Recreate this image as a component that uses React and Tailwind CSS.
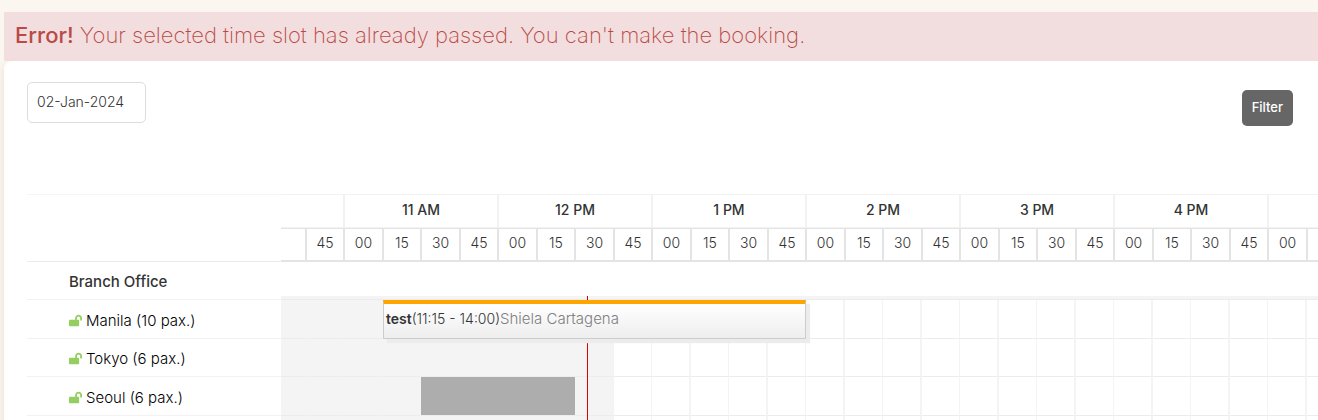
import React, { useState } from 'react';
import { FaLockOpen } from 'react-icons/fa';

const HOURS = ['11 AM', '12 PM', '1 PM', '2 PM', '3 PM', '4 PM'];
const QUARTERS = ['00', '15', '30', '45'];

const ROOMS = [
  { name: 'Manila', pax: 10, height: 'h-[39px]' },
  { name: 'Tokyo', pax: 6, height: 'h-[38px]' },
  { name: 'Seoul', pax: 6, height: 'h-[39px]' },
];

const SLOTS = [
  { key: '10 AM 30', label: '' },
  { key: '10 AM 45', label: '45' },
  ...HOURS.flatMap((h) => QUARTERS.map((q) => ({ key: `${h} ${q}`, label: q }))),
  { key: '5 PM 00', label: '00' },
  { key: '5 PM 15', label: '' },
];
const PAST_SLOTS = 9;

function slotWidth(i) {
  if (i === 0) return 'w-[25px]';
  return i % 2 ? 'w-[38px]' : 'w-[39px]';
}

function Booking({ title, time, owner }) {
  return (
    <div className="absolute left-0 top-0 z-10 w-[423px] h-[39px] border border-t-4 border-[#cccccc] border-t-[#ffa500] bg-linear-to-b from-white to-[#eeeeee] shadow-[4px_4px_1px_#ececec] pl-0.5 text-sm leading-[29px] whitespace-nowrap text-[#333333]">
      <b className="font-semibold">{title}</b>({time})<span className="text-[15px] text-[#808080]">{owner}</span>
    </div>
  );
}

function SlotCells({ room }) {
  return SLOTS.map((slot, i) => (
    <td
      key={slot.key}
      className={`relative border-b border-r-[#f4f4f4] border-b-[#ececec] ${i % 2 ? 'border-r' : 'border-r-2'} ${i < PAST_SLOTS ? 'bg-[#f4f4f4]' : ''}`}
    >
      {room === 'Manila' && slot.key === '11 AM 15' && (
        <Booking title="test" time="11:15 - 14:00" owner="Shiela Cartagena" />
      )}
      {room === 'Seoul' && slot.key === '11 AM 30' && (
        <div className="absolute left-0 top-0 z-10 w-[154px] h-[38px] bg-[#adadad]" />
      )}
    </td>
  ));
}

function Schedule() {
  return (
    <div className="relative overflow-hidden">
      <table className="w-0 table-fixed border-separate border-spacing-0 text-sm text-[#333333]">
        <colgroup>
          <col className="w-[254px]" />
          {SLOTS.map((slot, i) => <col key={slot.key} className={slotWidth(i)} />)}
        </colgroup>
        <thead>
          <tr className="h-[34px]">
            <td rowSpan={2} className="border-t border-b border-t-[#f5f5f5] border-b-[#ececec]" />
            <td colSpan={2} className="border-t border-r border-b border-[#f2f2f2]" />
            {HOURS.map((h) => (
              <th key={h} colSpan={4} scope="colgroup" className="border border-[#f2f2f2] pb-0.5 font-medium">{h}</th>
            ))}
            <td colSpan={2} className="border border-r-0 border-[#f2f2f2]" />
          </tr>
          <tr className="h-[34px]">
            {SLOTS.map((slot, i) => (
              <th
                key={slot.key}
                scope="col"
                className={`border-t border-r border-b-2 border-[#e4e4e4] pb-1 font-light ${i ? 'border-l' : ''}`}
              >
                {slot.label}
              </th>
            ))}
          </tr>
        </thead>
        <tbody>
          <tr className="h-[38px]">
            <th scope="row" className="border-b border-[#f2f2f2] pt-0.5 pl-[42px] text-left text-[15px] font-medium">Branch Office</th>
            <td colSpan={SLOTS.length} className="border-b border-[#ececec] align-bottom">
              <div className="h-[3px] bg-[#f4f4f4]" />
            </td>
          </tr>
          {ROOMS.map((room) => (
            <tr key={room.name} className={room.height}>
              <th scope="row" className="border-b border-[#f2f2f2] pt-[3px] pl-[42px] text-left text-[15px] font-light text-black whitespace-nowrap">
                <span className="flex items-center gap-1">
                  <FaLockOpen size={13} className="text-[#93cf5f]" />
                  {room.name} ({room.pax} pax.)
                </span>
              </th>
              <SlotCells room={room.name} />
            </tr>
          ))}
          <tr className="h-[38px]">
            <td />
            <SlotCells />
          </tr>
        </tbody>
      </table>
      {/* current time */}
      <div className="absolute left-[560px] top-[102px] bottom-0 w-px bg-[#dd0000]" />
    </div>
  );
}

export default function App() {
  const [date, setDate] = useState('02-Jan-2024');

  return (
    <div className="h-screen overflow-hidden bg-[#fbf6f0] pt-3 pl-1 font-['Inter',sans-serif] font-light">
      <div role="alert" className="bg-[#f2dede] px-[11px] pt-2 pb-[11px] text-[22px] leading-[30px] font-extralight text-[#b94a48]">
        <strong className="font-medium">Error!</strong> Your selected time slot has already passed. You can't make the booking.
      </div>
      <main className="min-h-screen rounded-tl-lg bg-white pt-[21px] pl-[23px] shadow-[0_4px_8px_#e8ddd0]">
        <div className="mb-[68px] flex items-start justify-between pr-[25px]">
          <input
            type="text"
            aria-label="Booking date"
            value={date}
            onChange={(e) => setDate(e.target.value)}
            className="w-[119px] h-[41px] rounded-[5px] border border-[#dddddd] px-[9px] pb-[3px] text-sm text-[#333333] outline-none"
          />
          <button type="button" className="mt-2 h-9 rounded-[5px] bg-[#666666] px-[10px] text-[13px] font-medium text-white">
            Filter
          </button>
        </div>
        <Schedule />
      </main>
    </div>
  );
}
